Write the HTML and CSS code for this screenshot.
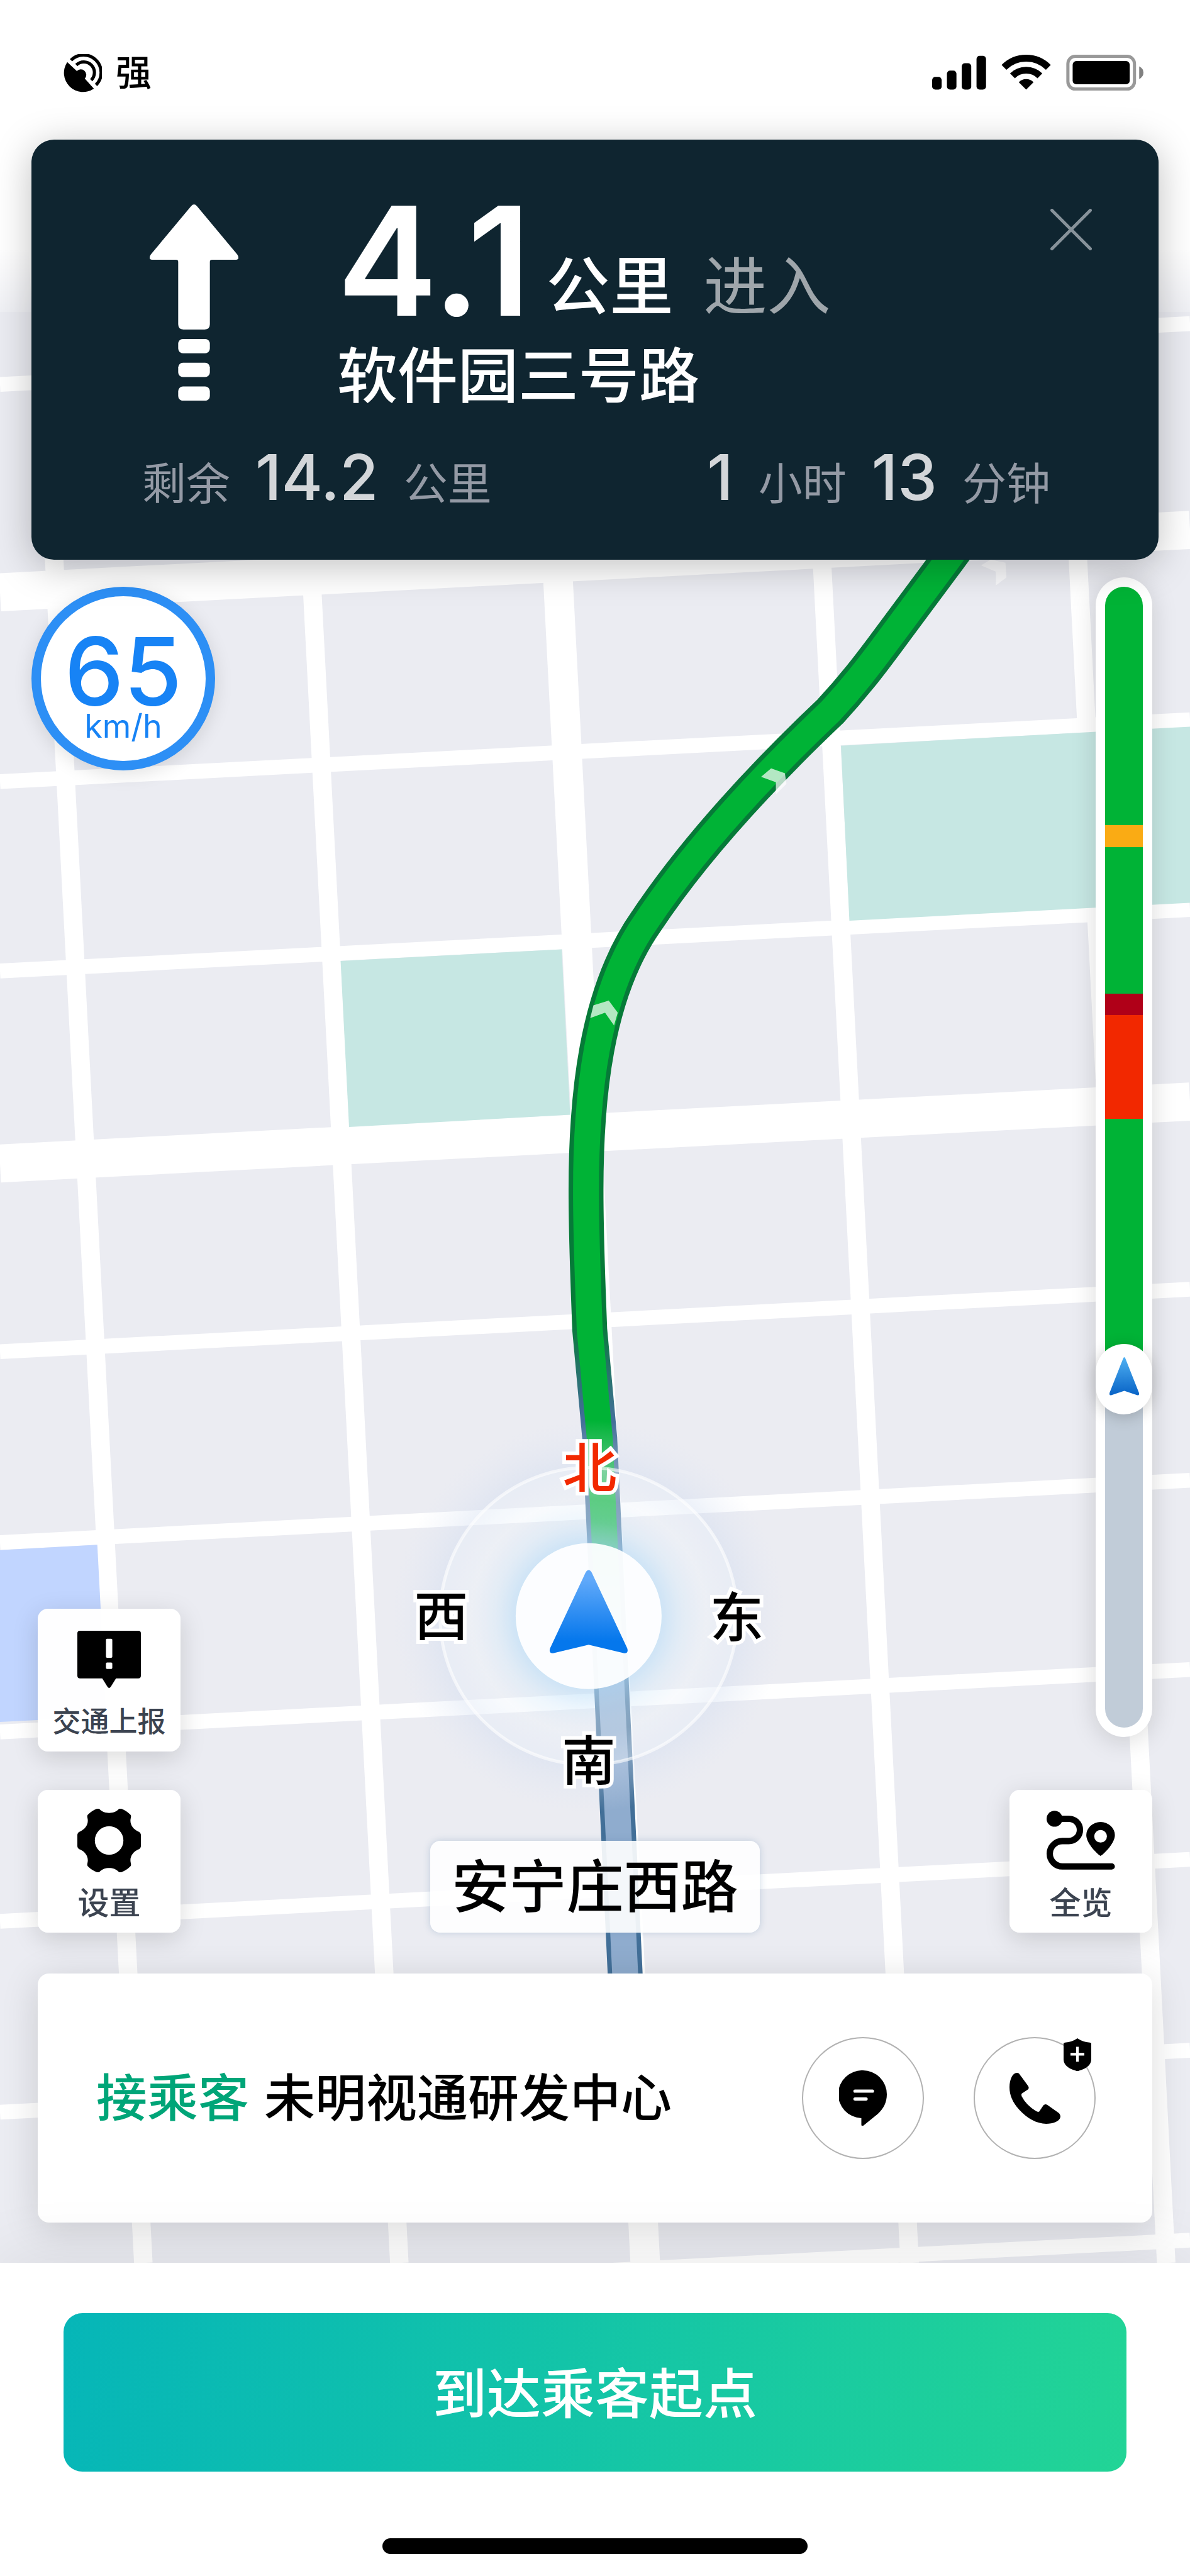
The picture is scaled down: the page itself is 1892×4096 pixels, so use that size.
FILE: index.html
```html
<!DOCTYPE html>
<html lang="zh-CN">
<head>
    <meta charset="UTF-8">
    <meta name="viewport" content="width=device-width, initial-scale=1.0">
    <link rel="stylesheet" href="styles.css">
    <title>导航</title>
</head>
<body>
    <div class="screen">
        <svg class="map" viewBox="0 0 2250 4279" aria-hidden="true">
            <defs>
                <linearGradient id="fade" x1="0" y1="0" x2="0" y2="1">
                    <stop offset="0.8" stop-color="#fff"/>
                    <stop offset="1" stop-color="#fff" stop-opacity="0.25"/>
                </linearGradient>
                <linearGradient id="routeEdge" gradientUnits="userSpaceOnUse" x1="0" y1="2500" x2="0" y2="2680">
                    <stop offset="0" stop-color="#067a38"/>
                    <stop offset="1" stop-color="#426f98"/>
                </linearGradient>
                <linearGradient id="routeFill" gradientUnits="userSpaceOnUse" x1="0" y1="2870" x2="0" y2="3120">
                    <stop offset="0" stop-color="#00b336"/>
                    <stop offset="1" stop-color="#8facce"/>
                </linearGradient>
                <linearGradient id="arrow" x1="0" y1="0" x2="0" y2="1">
                    <stop offset="0.1" stop-color="#62aafa"/>
                    <stop offset="0.85" stop-color="#0577ec"/>
                </linearGradient>
                <radialGradient id="glow">
                    <stop offset="0.37" stop-color="#8cc8f4" stop-opacity="0.5"/>
                    <stop offset="0.48" stop-color="#a0d0f5" stop-opacity="0.25"/>
                    <stop offset="0.6" stop-color="#c8dcf4" stop-opacity="0.15"/>
                    <stop offset="0.76" stop-color="#d0dcf0" stop-opacity="0.4"/>
                    <stop offset="1" stop-color="#dfe6f4" stop-opacity="0"/>
                </radialGradient>
            </defs>
            <rect width="2250" height="4279" fill="#ebecf2"/>

            <!-- streets -->
            <g stroke="#fff" stroke-width="28">
                <path d="M0 727L2250 612"/>
                <path d="M0 1478L2250 1361"/>
                <path d="M0 1836L2250 1720"/>
                <path d="M0 2556L2250 2438"/>
                <path d="M0 2917L2250 2799"/>
                <path d="M0 3275L2250 3157"/>
                <path d="M0 3633L2250 3516"/>
                <path d="M0 3994L2250 3877"/>
                <path d="M0 4353L2250 4236"/>
                <path stroke-width="72" d="M0 1120L2250 1002"/>
                <path stroke-width="72" d="M0 2200L2250 2083"/>
                <path stroke-width="35" d="M68 400L271 4279"/>
                <path stroke-width="35" d="M553 400L755 4279"/>
                <path stroke-width="56" d="M1019 400L1220 4279"/>
                <path stroke-width="35" d="M1520 400L1720 4279"/>
                <path stroke-width="35" d="M2004 400L2205 4279"/>
            </g>

            <!-- parks and water -->
            <path fill="#c6e7e3" d="M644 1817L1062 1795L1078 2108L660 2131Z"/>
            <path fill="#c6e7e3" d="M1590 1410L2250 1374V1707L1606 1741Z"/>
            <path fill="#c1d5ff" d="M0 2931L184 2921L201 3246L0 3256Z"/>

            <!-- route -->
            <g fill="none" stroke-linejoin="round">
                <path stroke="url(#routeEdge)" stroke-width="66" d="M1850 980L1792 1059L1685 1203C1640 1264 1610 1302 1570 1345C1430 1478 1310 1610 1222 1742C1125 1880 1108 2080 1108 2250C1108 2350 1112 2430 1115 2514L1134 2720L1182 3732L1190 3900"/>
                <path stroke="url(#routeFill)" stroke-width="49" d="M1850 980L1792 1059L1685 1203C1640 1264 1610 1302 1570 1345C1430 1478 1310 1610 1222 1742C1125 1880 1108 2080 1108 2250C1108 2350 1112 2430 1115 2514L1134 2720L1182 3732L1190 3900"/>
            </g>
            <g fill="#fff" fill-opacity="0.7">
                <path d="M1151 1892L1168 1915L1161 1939L1144 1915L1116 1925L1122 1901Z"/>
                <path d="M1458 1453L1484 1462L1487 1482L1467 1502V1479L1439 1469Z"/>
                <path d="M1873 1058L1901 1064L1903 1092L1883 1107V1081L1855 1069Z"/>
            </g>

            <!-- compass -->
            <circle cx="1113" cy="3056" r="370" fill="url(#glow)"/>
            <circle cx="1113" cy="3056" r="281" fill="#fff" fill-opacity="0.28" stroke="#fff" stroke-opacity="0.6" stroke-width="6"/>
            <circle cx="1113" cy="3056" r="138" fill="#fff" fill-opacity="0.93"/>
            <path fill="url(#arrow)" d="M1107 2974Q1113 2964 1119 2974L1186 3117Q1189 3127 1179 3126L1113 3110L1047 3126Q1037 3127 1040 3117Z"/>
            <g class="compass-text">
                <text class="north" x="1115" y="2812">北</text>
                <text x="834" y="3093">西</text>
                <text x="1393" y="3095">东</text>
                <text x="1113" y="3367">南</text>
            </g>

            <rect width="2250" height="590" fill="url(#fade)"/>
        </svg>

        <header class="status">
            <div class="gps">
                <svg class="gps-icon" viewBox="0 0 72 72" aria-hidden="true">
                    <path d="M7 15L25 32A10 10 0 1 1 40 46L57 65A36 36 0 0 1 7 15Z"/>
                    <path d="M14 11.5A33 33 0 0 1 61 58" fill="none" stroke="#000" stroke-width="6"/>
                    <path d="M24 20.5A19 19 0 0 1 52 49" fill="none" stroke="#000" stroke-width="6"/>
                </svg>
                <span>强</span>
            </div>
            <svg class="signal" viewBox="0 0 400 68" aria-hidden="true">
                <rect x="0" y="42" width="18" height="24" rx="6"/>
                <rect x="28" y="30" width="18" height="36" rx="6"/>
                <rect x="56" y="16" width="18" height="50" rx="6"/>
                <rect x="84" y="2" width="18" height="64" rx="6"/>
                <path d="M136 24A59.500 59.500 0 0 1 220 24" fill="none" stroke="#000" stroke-width="13"/>
                <path d="M152 40A37 37 0 0 1 204 40" fill="none" stroke="#000" stroke-width="13"/>
                <path d="M178 66L164 52A20 20 0 0 1 192 52Z"/>
                <rect x="257" y="3" width="126" height="62" rx="14" fill="none" stroke="#999" stroke-width="6"/>
                <rect x="266" y="12" width="108" height="44" rx="7"/>
                <path d="M392 22Q400 26 400 34T392 46Z" fill="#808080"/>
            </svg>
        </header>

        <section class="guide">
            <button class="close" type="button" aria-label="关闭">
                <svg viewBox="0 0 78 78"><path d="M3 3L75 75M75 3L3 75"/></svg>
            </button>
            <div class="turn">
                <svg class="turn-arrow" viewBox="0 0 168 372" aria-hidden="true">
                    <path d="M78 4Q84 -4 90 4L166 95Q172 105 162 105H118Q114 105 114 109V227Q114 237 104 237H64Q54 237 54 227V109Q54 105 50 105H6Q-4 105 2 95Z"/>
                    <rect x="54" y="255" width="60" height="27" rx="9"/>
                    <rect x="54" y="300" width="60" height="27" rx="9"/>
                    <rect x="54" y="345" width="60" height="27" rx="9"/>
                </svg>
                <div>
                    <div class="distance">
                        <strong>4.1</strong><span class="unit">公里</span><span class="action">进入</span>
                    </div>
                    <div class="road">软件园三号路</div>
                </div>
            </div>
            <div class="remain">
                <div class="remain-item"><span>剩余</span><b>14.2</b><span>公里</span></div>
                <div class="remain-item"><b>1</b><span>小时</span><b>13</b><span>分钟</span></div>
            </div>
        </section>

        <main class="overlay">
            <div class="left">
                <div class="speed">
                    <span class="speed-num">65</span>
                    <span class="speed-unit">km/h</span>
                </div>
                <div class="tools">
                    <button class="tool tool-small" type="button">
                        <svg viewBox="0 -6 120 120" aria-hidden="true">
                            <path fill-rule="evenodd" d="M5 0H115Q120 0 120 5V85Q120 90 115 90H73L63 106Q60 110 57 106L47 90H5Q0 90 0 85V5Q0 0 5 0ZM56 15Q54 15 54 17V49Q54 51 56 51H64Q66 51 66 49V17Q66 15 64 15ZM56 60Q54 60 54 62V70Q54 72 56 72H64Q66 72 66 70V62Q66 60 64 60Z"/>
                        </svg>
                        交通上报
                    </button>
                    <button class="tool" type="button">
                        <svg viewBox="0 0 120 120" aria-hidden="true">
                            <path fill-rule="evenodd" d="M42 1C47 6 53 8 60 8S73 6 78 1Q80 -1 83 0Q93 4 100 11Q102 13 101 17C98 28 104 38 115 43Q119 44 120 49Q121 60 120 71Q119 76 115 77C104 82 98 92 101 103Q102 107 100 109Q93 116 83 120Q80 121 78 119C73 114 67 112 60 112S47 114 42 119Q40 121 37 120Q27 116 20 109Q18 107 19 103C22 92 16 82 5 77Q1 76 0 71Q-1 60 0 49Q1 44 5 43C16 38 22 28 19 17Q18 13 20 11Q27 4 37 0Q40 -1 42 1ZM60 33A27 27 0 1 0 60 87A27 27 0 1 0 60 33Z"/>
                        </svg>
                        设置
                    </button>
                </div>
            </div>

            <div class="here">安宁庄西路</div>

            <div class="right">
                <div class="traffic">
                    <div class="seg seg-a"></div>
                    <div class="seg seg-slow"></div>
                    <div class="seg seg-b"></div>
                    <div class="seg seg-jam"></div>
                    <div class="seg seg-busy"></div>
                    <div class="seg seg-c">
                        <div class="thumb">
                            <svg viewBox="0 0 56 73" aria-hidden="true">
                                <defs>
                                    <linearGradient id="thumbArrow" x1="0" y1="0" x2="0" y2="1">
                                        <stop offset="0" stop-color="#4fb0f2"/>
                                        <stop offset="1" stop-color="#0863c6"/>
                                    </linearGradient>
                                </defs>
                                <path fill="url(#thumbArrow)" d="M26 2Q28 -2 30 2L56 68Q57 74 52 72L28 64L4 72Q-1 74 0 68Z"/>
                            </svg>
                        </div>
                    </div>
                    <div class="seg seg-done"></div>
                </div>
                <button class="tool" type="button">
                    <svg class="wide" viewBox="0 -4 129 120" aria-hidden="true">
                        <circle cx="15" cy="15" r="15"/>
                        <path d="M15 15H42A21 21 0 0 1 42 57H30A24 24 0 0 0 30 105H123" fill="none" stroke="#000" stroke-width="12" stroke-linecap="round"/>
                        <path fill-rule="evenodd" d="M102 85C98 84 75 62 75 46A27 25 0 0 1 129 46C129 62 106 84 102 85ZM102 36A12 12 0 1 0 102 60A12 12 0 1 0 102 36Z"/>
                    </svg>
                    全览
                </button>
            </div>
        </main>

        <section class="trip">
            <p class="trip-text"><span class="pickup">接乘客</span><span>未明视通研发中心</span></p>
            <button class="round" type="button" aria-label="消息">
                <svg class="chat" viewBox="0 0 90 105">
                    <path d="M45 0A45 45 0 0 1 90 45C90 60 84 72 73 82L46 104Q42 106 42 102V90A45 45 0 0 1 45 0Z"/>
                    <path d="M30 39H63M30 54H51" stroke="#fff" stroke-width="6" stroke-linecap="round"/>
                </svg>
            </button>
            <button class="round" type="button" aria-label="电话">
                <svg class="phone" viewBox="0 0 96 96">
                    <path d="M14 0Q18 0 20 4L34 23Q38 28 35 31L23 39Q22 41 23 44Q31 60 50 72Q53 74 56 73L64 61Q67 58 71 60L92 75Q96 78 96 83C94 92 82 96 69 96C52 96 32 85 18 69C6 56 0 42 0 27C0 12 6 0 14 0Z"/>
                </svg>
                <svg class="shield" viewBox="0 0 52 62">
                    <path d="M26 0Q36 7 49 8Q52 8 52 10V40C52 50 42 58 29 61Q26 63 23 61C10 58 0 50 0 40V10Q0 8 3 8Q16 7 26 0Z"/>
                    <path d="M13 30H39M26 16V44" stroke="#fff" stroke-width="5"/>
                </svg>
            </button>
        </section>

        <footer class="sheet">
            <button class="arrive" type="button">到达乘客起点</button>
            <div class="home-bar"></div>
        </footer>
    </div>
</body>
</html>
```
FILE: styles.css
```css
* {
    box-sizing: border-box;
}

body {
    margin: 0;
    font-family: "Inter", "Noto Sans CJK SC", sans-serif;
    background-color: #fff;
    color: #000;
}

button {
    margin: 0;
    padding: 0;
    border: none;
    font-family: inherit;
    cursor: pointer;
}

svg {
    display: block;
}

.screen {
    position: relative;
    display: flex;
    flex-direction: column;
    min-height: 100vh;
    overflow: hidden;
}

.map {
    position: absolute;
    top: 0;
    left: 0;
    width: 100%;
    z-index: -1;
}

.compass-text {
    font-family: "Noto Sans CJK SC", sans-serif;
    font-size: 102px;
    font-weight: 500;
    text-anchor: middle;
    stroke: #fff;
    stroke-width: 14px;
    paint-order: stroke;
}

.north {
    fill: #f22800;
}

/* status bar */
.status {
    display: flex;
    justify-content: space-between;
    align-items: center;
    height: 222px;
    padding: 10px 74px 0 101px;
}

.gps {
    display: flex;
    align-items: center;
    gap: 22px;
    font-size: 57px;
    font-weight: 500;
    line-height: 64px;
}

.gps-icon {
    width: 61px;
}

.signal {
    width: 336px;
}

/* guide card */
.guide {
    position: relative;
    margin: 0 50px;
    padding: 103px 172px 81px 176px;
    border-radius: 36px;
    background-color: #0f2530;
    color: #fff;
    box-shadow: 0 10px 60px rgba(0, 0, 0, 0.25);
}

.close {
    position: absolute;
    top: 110px;
    right: 106px;
    width: 66px;
    background: none;
}

.close path {
    fill: none;
    stroke: #87929a;
    stroke-width: 6;
    stroke-linecap: round;
}

.turn {
    display: flex;
    align-items: flex-start;
    gap: 157px;
    padding-left: 12px;
}

.turn-arrow {
    width: 141px;
    fill: #fff;
}

.distance {
    display: flex;
    align-items: flex-end;
    line-height: 100px;
}

.distance strong {
    font-size: 240px;
    font-weight: 600;
    line-height: 180px;
}

.unit {
    margin-left: 24px;
    font-size: 101px;
    font-weight: 500;
}

.action {
    margin-left: 48px;
    font-size: 101px;
    font-weight: 400;
    color: #9fa6ab;
}

.road {
    margin-top: 44px;
    font-size: 96px;
    font-weight: 500;
    line-height: 96px;
}

.remain {
    display: flex;
    justify-content: space-between;
    margin-top: 64px;
}

.remain-item {
    display: flex;
    align-items: baseline;
    gap: 40px;
    font-size: 70px;
    line-height: 70px;
    color: #949aa5;
}

.remain-item b {
    font-size: 100px;
    font-weight: 500;
    line-height: 100px;
    color: #d3d6d9;
}

/* widgets over the map */
.overlay {
    flex: 1;
    display: grid;
    grid-template-columns: 1fr auto 1fr;
    padding: 28px 60px 65px 50px;
}

.left,
.right {
    display: flex;
    flex-direction: column;
}

.left {
    justify-content: space-between;
    padding-top: 15px;
}

.right {
    align-items: flex-end;
    gap: 84px;
}

.speed {
    display: flex;
    flex-direction: column;
    align-items: center;
    width: 292px;
    height: 292px;
    padding-top: 58px;
    border: 15px solid #2d8ff5;
    border-radius: 50%;
    background-color: #fff;
    color: #1783f5;
    box-shadow: 0 6px 30px rgba(0, 0, 0, 0.12);
}

.speed-num {
    font-size: 150px;
    font-weight: 500;
    line-height: 124px;
}

.speed-unit {
    font-size: 52px;
    line-height: 50px;
}

.tools {
    display: flex;
    flex-direction: column;
    gap: 61px;
    margin-left: 10px;
}

.tool {
    display: flex;
    flex-direction: column;
    align-items: center;
    gap: 24px;
    width: 227px;
    height: 227px;
    padding-top: 30px;
    border-radius: 16px;
    background-color: rgba(255, 255, 255, 0.98);
    color: #3b4350;
    font-size: 50px;
    font-weight: 500;
    line-height: 50px;
    box-shadow: 0 10px 40px rgba(0, 0, 0, 0.15);
}

.tool-small {
    font-size: 45px;
}

.tool svg {
    height: 101px;
}

.here {
    align-self: end;
    margin-left: 10px;
    padding: 23px 34px;
    border-radius: 16px;
    background-color: rgba(255, 255, 255, 0.9);
    font-size: 91px;
    font-weight: 500;
    line-height: 100px;
    box-shadow: 0 0 12px rgba(90, 130, 170, 0.3);
}

.traffic {
    flex: 1;
    display: flex;
    flex-direction: column;
    width: 90px;
    padding: 15px;
    border-radius: 45px;
    background-color: #fff;
    box-shadow: 0 6px 40px rgba(0, 0, 0, 0.15);
}

.seg {
    background-color: #00b336;
}

.seg-a {
    flex: 451;
    border-radius: 30px 30px 0 0;
}

.seg-slow {
    flex: 41;
    background-color: #faab14;
}

.seg-b {
    flex: 278;
}

.seg-jam {
    flex: 40;
    background-color: #b00018;
}

.seg-busy {
    flex: 196;
    background-color: #f22800;
}

.seg-c {
    position: relative;
    flex: 493;
}

.seg-done {
    flex: 659;
    border-radius: 0 0 30px 30px;
    background-color: #c1ccd8;
}

.thumb {
    position: absolute;
    bottom: -56px;
    left: -15px;
    display: flex;
    justify-content: center;
    width: 90px;
    height: 112px;
    padding-top: 21px;
    border-radius: 45px;
    background-color: #fff;
    box-shadow: 0 4px 24px rgba(0, 0, 0, 0.2);
}

.thumb svg {
    width: 47px;
    height: 61px;
}

/* passenger card */
.trip {
    display: flex;
    align-items: center;
    gap: 79px;
    min-height: 396px;
    margin: 0 60px 64px;
    padding: 0 90px 0 93px;
    border-radius: 18px;
    background-color: #fff;
    box-shadow: 0 10px 60px rgba(0, 0, 0, 0.14);
}

.trip-text {
    flex: 1;
    display: flex;
    gap: 24px;
    margin: 0;
    font-size: 81px;
    font-weight: 500;
    line-height: 80px;
}

.pickup {
    color: #00a578;
}

.round {
    position: relative;
    display: flex;
    justify-content: center;
    align-items: center;
    width: 194px;
    height: 194px;
    border: 2px solid #b2b2b2;
    border-radius: 50%;
    background: none;
}

.chat {
    width: 76px;
}

.phone {
    width: 81px;
}

.shield {
    position: absolute;
    top: 0;
    right: 5px;
    width: 44px;
}

/* bottom sheet */
.sheet {
    display: flex;
    flex-direction: column;
    align-items: center;
    gap: 106px;
    padding: 80px 101px 35px;
    background-color: #fff;
    box-shadow: 0 -10px 100px rgba(0, 0, 0, 0.08);
}

.arrive {
    width: 100%;
    height: 252px;
    padding-bottom: 8px;
    border-radius: 30px;
    background: linear-gradient(100deg, #06b6b8, #22d496);
    color: #fff;
    font-size: 86px;
    font-weight: 500;
}

.home-bar {
    width: 40%;
    max-width: 676px;
    height: 25px;
    border-radius: 13px;
    background-color: #000;
}
```
